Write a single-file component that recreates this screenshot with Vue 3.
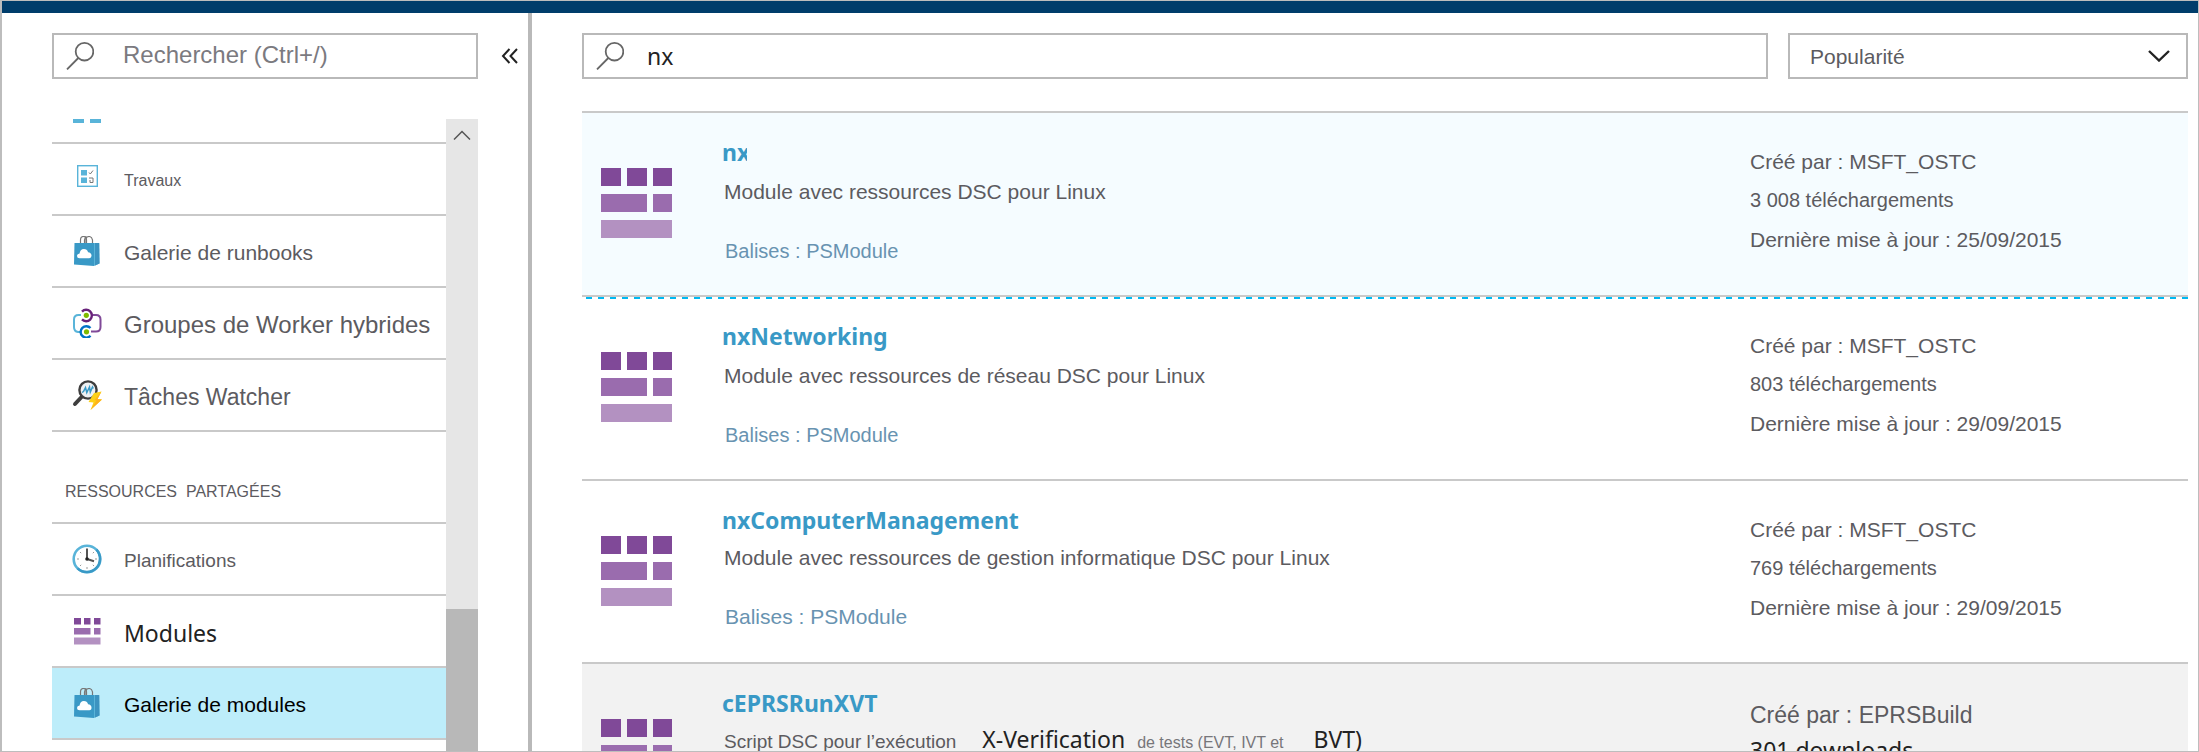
<script setup>
import { ref } from 'vue'

const menuFilter = ref('')
const query = ref('nx')
const sort = ref('popularity')

const processItems = [
  { icon: 'jobs', label: 'Travaux', size: 'xs' },
  { icon: 'bag', label: 'Galerie de runbooks', size: 'md' },
  { icon: 'hybrid', label: 'Groupes de Worker hybrides', size: 'lg' },
  { icon: 'watcher', label: 'Tâches Watcher', size: 'ml' },
]
const sharedItems = [
  { icon: 'clock', label: 'Planifications', size: 'sm' },
  { icon: 'modules', label: 'Modules', size: 'ui' },
  { icon: 'bag', label: 'Galerie de modules', size: 'md', selected: true },
]
const groups = [
  { title: '', items: processItems },
  { title: 'RESSOURCES\u00a0 PARTAGÉES', items: sharedItems },
]

const modules = [
  {
    name: 'nx',
    state: 'active',
    text: [{ t: 'Module avec ressources DSC pour Linux', k: 'body' }],
    tags: 'Balises : PSModule',
    author: 'Créé par : MSFT_OSTC',
    downloads: '3 008 téléchargements',
    updated: 'Dernière mise à jour : 25/09/2015',
  },
  {
    name: 'nxNetworking',
    text: [{ t: 'Module avec ressources de réseau DSC pour Linux', k: 'body' }],
    tags: 'Balises : PSModule',
    author: 'Créé par : MSFT_OSTC',
    downloads: '803 téléchargements',
    updated: 'Dernière mise à jour : 29/09/2015',
  },
  {
    name: 'nxComputerManagement',
    state: 'wide',
    text: [{ t: 'Module avec ressources de gestion informatique DSC pour Linux', k: 'body' }],
    tags: 'Balises : PSModule',
    author: 'Créé par : MSFT_OSTC',
    downloads: '769 téléchargements',
    updated: 'Dernière mise à jour : 29/09/2015',
  },
  {
    name: 'cEPRSRunXVT',
    state: 'hovered',
    text: [
      { t: 'Script DSC pour l’exécution', k: 'small' },
      { t: 'X-Verification', k: 'term' },
      { t: 'de tests (EVT, IVT et', k: 'tiny' },
      { t: 'BVT)', k: 'term last' },
    ],
    author: 'Créé par : EPRSBuild',
    downloads: '301 downloads',
  },
]
</script>

<template>
  <div class="page">
    <header class="topbar"></header>
    <div class="columns">
      <aside class="sidebar">
        <div class="side-head">
          <label class="search side-search">
            <svg class="lens" viewBox="0 0 28 28" aria-hidden="true">
              <circle cx="18.5" cy="9.7" r="8.8" /><path d="M12.3 16 1 27.4" />
            </svg>
            <input v-model="menuFilter" type="search" placeholder="Rechercher (Ctrl+/)" aria-label="Rechercher" />
          </label>
          <button class="collapse" type="button" aria-label="Réduire le menu">
            <svg viewBox="0 0 18 16" aria-hidden="true"><path d="M8.5 1 2 8l6.500 7M16 1 9.500 8l6.500 7" /></svg>
          </button>
        </div>

        <div class="scroller">
          <nav class="menu">
            <div class="partial">
              <svg viewBox="0 0 30 4" aria-hidden="true"><path d="M1 0h11v4H1zM18 0h11v4H18z" fill="#59b4d9" /></svg>
            </div>
            <template v-for="group in groups" :key="group.title">
              <h2 v-if="group.title" class="group-title">{{ group.title }}</h2>
              <ul>
                <li v-for="item in group.items" :key="item.label" :class="{ selected: item.selected }">
                  <a href="#">
                    <svg class="item-icon" viewBox="0 0 30 30" aria-hidden="true">
                      <g v-if="item.icon === 'jobs'">
                        <rect x="5.700" y="1.700" width="19.600" height="20.600" fill="#fff" stroke="#59b4d9" stroke-width="1.400" />
                        <path d="M9 6h6v5.500H9zM9 13.500h6V19H9z" fill="#59b4d9" />
                        <path d="m17 8.500 1.300 1.500L21 6.500M17 14h4v4.500h-3V16" fill="none" stroke="#777" />
                      </g>
                      <g v-else-if="item.icon === 'bag'">
                        <path d="M8.500 8V4q0-3.500 3-3.500t3 3.500v4M14 8V3.500q.3-3 3-3t3.500 3.500v4M12.500 8V4q.4-3 2-3.400" fill="none" stroke="#777" stroke-width="1.200" />
                        <path d="M2.500 7H22v23L2 28.600z" fill="#3999c6" />
                        <path d="M22 7h5.200l.3 20.500L22 30z" fill="#59b4d9" />
                        <path d="M23 7h4.200l.3 20.500-4.500 2z" fill="#3c93c0" />
                        <path d="M7.500 22.200q-2.500-.2-2.500-2.300t2.600-2.300q.4-4.400 4.300-4.600 3.200 0 4.200 3.300 3 .3 3.400 3 .2 2.900-2.200 2.900z" fill="#fff" />
                      </g>
                      <g v-else-if="item.icon === 'hybrid'" fill="none" stroke-width="2">
                        <path d="M9 7H6.500Q2 7 2 11.500v7.500q0 4.500 4 5h3" stroke="#59b4d9" />
                        <path d="M20.500 7H24q4.500 0 4.500 4.500V19q0 4.500-4.500 4.500h-5" stroke="#804998" />
                        <path d="M10 3.600a5.700 5.700 0 1 1 0 7.800" stroke="#68217a" stroke-width="2.400" />
                        <path d="M18.500 27.800a5.700 5.700 0 1 1 0-7.800" stroke="#0072c6" stroke-width="2.400" />
                        <circle cx="14.300" cy="7.300" r="2.600" fill="#7fba00" />
                        <circle cx="14.500" cy="23.800" r="2.600" fill="#7fba00" />
                      </g>
                      <g v-else-if="item.icon === 'watcher'">
                        <path d="m10.500 16-7.500 8" stroke="#3e3e3e" stroke-width="4" stroke-linecap="round" />
                        <circle cx="16" cy="10" r="8.600" fill="#eef1f3" stroke="#3e3e3e" stroke-width="2.400" />
                        <path d="m10 12.500 1.500-1 2-4 1.300 5L17.500 7l.8 5 2.200-5 .8 1.500" fill="none" stroke="#3999c6" stroke-width="1.500" />
                        <path d="m22 13 7.500-1.500-4 7.500 4.500.5L18.500 30l3-7.500-5-.5z" fill="#fcd116" />
                        <path d="M29.500 11.500 25.500 19l4.500.5L18.500 30l6-9.500-2-.5z" fill="#ffb31a" />
                      </g>
                      <g v-else-if="item.icon === 'clock'">
                        <circle cx="15" cy="15" r="13.300" fill="#fff" stroke="#59b4d9" stroke-width="2.600" />
                        <path d="M24.400 5.600A13.300 13.300 0 0 1 5.600 24.400" fill="none" stroke="#3999c6" stroke-width="2.600" />
                        <path d="m8 8 1.200 1.200M22 8l-1.200 1.200M8 22l1.200-1.200M22 22l-1.200-1.200M5 15h2M23 15h2M15 23v2" stroke="#999" />
                        <path d="M15 4.500V15l7 2.300" fill="none" stroke="#555" stroke-width="2" />
                        <circle cx="15" cy="15" r="1.800" fill="#222" />
                      </g>
                      <g v-else>
                        <path d="M2 2h7v6.500H2zM12 2h6.500v6.500H12zM22 2h6.500v6.500H22z" fill="#804998" />
                        <path d="M2 12h16.500v6.500H2zM22 12h6.500v6.500H22z" fill="#9a6cae" />
                        <path d="M2 21.500h26.500v7H2z" fill="#b391c1" />
                      </g>
                    </svg>
                    <span class="item-label" :class="item.size">{{ item.label }}</span>
                  </a>
                </li>
              </ul>
            </template>
          </nav>
          <div class="scrollbar">
            <button type="button" aria-label="Défiler vers le haut">
              <svg viewBox="0 0 18 10" aria-hidden="true"><path d="m1 9.500 8-8 8 8" /></svg>
            </button>
            <div class="thumb"></div>
          </div>
        </div>
      </aside>

      <main class="content">
        <div class="toolbar">
          <label class="search">
            <svg class="lens" viewBox="0 0 28 28" aria-hidden="true">
              <circle cx="18.5" cy="9.7" r="8.8" /><path d="M12.3 16 1 27.4" />
            </svg>
            <input v-model="query" class="query" type="search" aria-label="Rechercher un module" />
          </label>
          <div class="sort">
            <select v-model="sort" aria-label="Trier par">
              <option value="popularity">Popularité</option>
            </select>
            <svg viewBox="0 0 22 12" aria-hidden="true"><path d="m1 1 10 9.500L21 1" /></svg>
          </div>
        </div>

        <ul class="results">
          <li v-for="m in modules" :key="m.name" class="result" :class="m.state">
            <svg class="module-icon" viewBox="0 0 72 72" aria-hidden="true">
              <path d="M0 1h20v18H0zM26 1h20v18H26zM52 1h19v18H52z" fill="#804998" />
              <path d="M0 27h46v18H0zM52 27h19v18H52z" fill="#9a6cae" />
              <path d="M0 53h71v18H0z" fill="#b391c1" />
            </svg>
            <div class="info">
              <h3><a href="#">{{ m.name }}</a></h3>
              <p class="desc"><span v-for="part in m.text" :key="part.t" :class="part.k">{{ part.t }}</span></p>
              <p v-if="m.tags" class="tags">{{ m.tags }}</p>
            </div>
            <div class="meta">
              <p class="author">{{ m.author }}</p>
              <p class="downloads">{{ m.downloads }}</p>
              <p v-if="m.updated">{{ m.updated }}</p>
            </div>
          </li>
        </ul>
      </main>
    </div>
  </div>
</template>

<style>
body {
  margin: 0;
  background: #fff;
}
</style>

<style scoped>
* {
  box-sizing: border-box;
}
.page {
  --ui: "Noto Sans", "Open Sans", sans-serif;
  display: flex;
  flex-direction: column;
  height: 100vh;
  overflow: hidden;
  border: 1px solid #bdbdbd;
  border-left-width: 2px;
  background: #fff;
  color: #5c5b5f;
  font: 21px/32px "Liberation Sans", Arial, sans-serif;
}
ul, p, h2, h3 {
  margin: 0;
  padding: 0;
  list-style: none;
  font-weight: 400;
}
a {
  color: inherit;
  text-decoration: none;
}
button {
  display: flex;
  align-items: center;
  justify-content: center;
  padding: 0;
  border: 0;
  background: none;
}
svg {
  flex: none;
}
.topbar {
  flex: none;
  height: 12px;
  background: #003d6b;
}
.columns {
  display: flex;
  flex: 1;
  min-height: 0;
}

/* Sidebar */
.sidebar {
  display: flex;
  flex: none;
  flex-direction: column;
  width: 530px;
  padding: 20px 0 0 50px;
  border-right: 4px solid #b9b9b9;
}
.side-head {
  display: flex;
}
.search {
  display: flex;
  flex: 1;
  align-items: center;
  height: 46px;
  padding-left: 12px;
  border: 2px solid #b9b9b9;
  background: #fff;
}
.lens {
  width: 28px;
  height: 28px;
  fill: none;
  stroke: #666;
  stroke-width: 1.8;
}
input {
  flex: 1;
  min-width: 0;
  height: 42px;
  padding: 0 12px 3px 29px;
  border: 0;
  outline: 0;
  background: none;
  color: #222;
  font: 24px "Liberation Sans", Arial, sans-serif;
  appearance: none;
}
input::placeholder {
  color: #7b7a7f;
  opacity: 1;
}
input.query {
  padding: 0 12px 1px 23px;
  font: 23px var(--ui);
}
.collapse {
  width: 50px;
  padding-left: 14px;
}
.collapse svg {
  width: 18px;
  height: 16px;
  fill: none;
  stroke: #222;
  stroke-width: 2;
}
.scroller {
  display: flex;
  flex: 1;
  min-height: 0;
  margin: 40px 50px 0 0;
}
.menu {
  flex: 1;
  overflow: hidden;
}
.partial {
  display: flex;
  height: 23px;
  padding-left: 20px;
}
.partial svg {
  width: 30px;
  height: 4px;
}
.menu li {
  border-top: 2px solid #c9c9c9;
}
.menu ul {
  border-bottom: 2px solid #c9c9c9;
}
.menu li a {
  display: flex;
  align-items: center;
  gap: 22px;
  height: 70px;
  padding-left: 20px;
}
.selected {
  background: #bdedfa;
  color: #000;
}
.item-icon {
  width: 30px;
  height: 30px;
}
.item-label {
  padding-top: 3px;
  white-space: nowrap;
}
.xs { font-size: 16px; }
.sm { font-size: 19px; }
.md { font-size: 21px; }
.ml { font-size: 23px; }
.lg { font-size: 24px; }
.ui {
  color: #222;
  font: 23px/32px var(--ui);
}
.group-title {
  height: 90px;
  padding: 44px 0 0 13px;
  font-size: 16px;
}
.scrollbar {
  display: flex;
  flex: none;
  flex-direction: column;
  justify-content: space-between;
  width: 32px;
  background: #e6e6e6;
}
.scrollbar button {
  height: 32px;
}
.scrollbar svg {
  width: 18px;
  height: 10px;
  fill: none;
  stroke: #555;
  stroke-width: 1.5;
}
.thumb {
  height: 22.5%;
  background: #b8b8b8;
}

/* Module list */
.content {
  flex: 1;
  min-width: 0;
  padding: 20px 10px 0 50px;
}
.toolbar {
  display: flex;
  gap: 20px;
}
.sort {
  display: grid;
  flex: none;
  align-items: center;
  width: 400px;
}
.sort > * {
  grid-area: 1 / 1;
}
.sort select {
  height: 46px;
  padding: 0 60px 0 20px;
  border: 2px solid #b9b9b9;
  border-radius: 0;
  background: #fff;
  color: #5c5b5f;
  font: 21px "Liberation Sans", Arial, sans-serif;
  appearance: none;
}
.sort svg {
  justify-self: end;
  width: 22px;
  height: 12px;
  margin-right: 18px;
  fill: none;
  stroke: #222;
  stroke-width: 2.4;
  pointer-events: none;
}
.results {
  margin-top: 32px;
}
.result {
  position: relative;
  display: flex;
  align-items: flex-start;
  padding-left: 19px;
  border-top: 2px solid #c9c9c9;
}
.active {
  background: #f5fcff;
}
.active::after {
  position: absolute;
  right: 0;
  bottom: -4px;
  left: 0;
  height: 2px;
  background: repeating-linear-gradient(90deg, transparent 0 4px, #00b9f2 4px 10px, transparent 10px 12px);
  content: "";
}
.hovered {
  background: #f2f2f2;
}
.module-icon {
  width: 72px;
  height: 72px;
  margin-top: 54px;
}
.info {
  flex: 1;
  min-width: 0;
  padding: 23px 0 28px 49px;
}
h3 {
  color: #3999c6;
  font: 700 23px/32px var(--ui);
}
.active h3 {
  width: 25px;
  overflow: hidden;
}
.desc {
  display: flex;
  align-items: baseline;
  height: 32px;
  margin-top: 8px;
  padding-left: 2px;
  white-space: nowrap;
}
.wide .desc,
.hovered .desc {
  margin-top: 6px;
}
.small {
  font-size: 19px;
}
.term {
  margin-left: 26px;
  color: #222;
  font: 23px/28px var(--ui);
}
.tiny {
  margin-left: 12px;
  color: #77767a;
  font-size: 16px;
}
.last {
  margin-left: 30px;
}
.tags {
  margin-top: 27px;
  padding-left: 3px;
  color: #6893b1;
  font-size: 20px;
}
.wide .tags {
  margin-bottom: 1px;
  font-size: 21px;
}
.meta {
  flex: none;
  width: 438px;
  padding-top: 29px;
  line-height: 39px;
}
.downloads {
  font-size: 20px;
}
.hovered .author {
  font-size: 23px;
  line-height: 44px;
}
.hovered .downloads {
  color: #222;
  font: 23px/26px var(--ui);
}
</style>
